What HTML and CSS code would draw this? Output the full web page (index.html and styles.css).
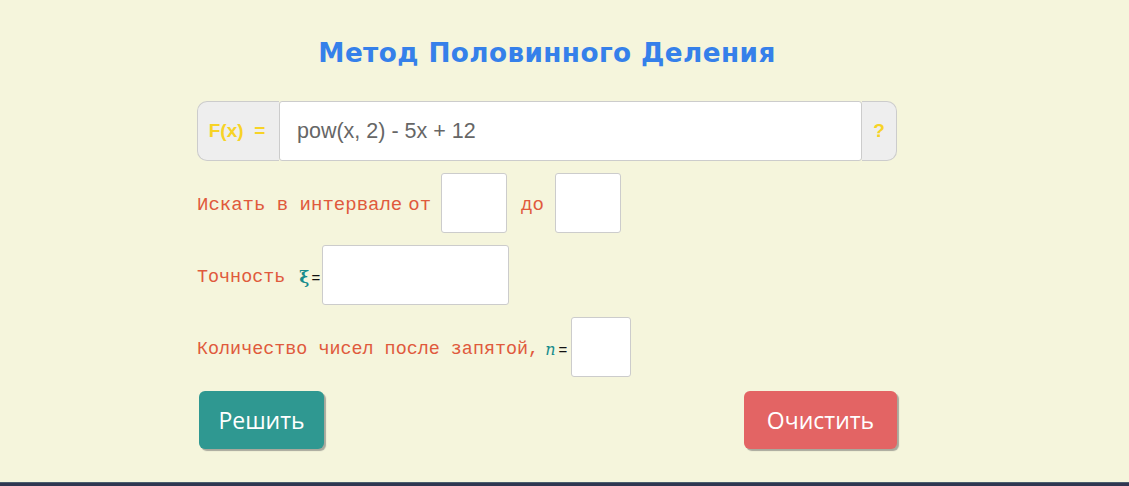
FILE: index.html
```html
<!DOCTYPE html>
<html lang="ru">
<head>
<meta charset="utf-8">
<title>Метод Половинного Деления</title>
<link rel="stylesheet" href="styles.css">
</head>
<body>
<main class="page">
  <div class="wrap">
    <h1 class="title">Метод Половинного Деления</h1>
    <div class="fx-group">
      <span class="addon addon-left">F(x)&nbsp; =</span>
      <input class="fx-input" type="text" value="pow(x, 2) - 5x + 12">
      <span class="addon addon-right">?</span>
    </div>
    <div class="row row-interval">
      <span class="lbl">Искать в интервале</span>
      <span class="lbl lbl-ot">от</span>
      <input class="box box-sq" type="text">
      <span class="lbl lbl-do">до</span>
      <input class="box box-sq" type="text">
    </div>
    <div class="row">
      <span class="lbl">Точность</span>
      <span class="sym sym-xi">ξ</span>
      <span class="eq eq-xi">=</span>
      <input class="box box-wide" type="text">
    </div>
    <div class="row">
      <span class="lbl">Количество чисел после запятой,</span>
      <span class="sym sym-n">n</span>
      <span class="eq">=</span>
      <input class="box box-n" type="text">
    </div>
    <div class="actions">
      <button class="btn btn-solve">Решить</button>
      <button class="btn btn-clear">Очистить</button>
    </div>
  </div>
</main>
<footer class="bottom-bar"></footer>
</body>
</html>
```
FILE: styles.css
```css
html, body {
  margin: 0;
  padding: 0;
  height: 100%;
}
body {
  background: #f5f5dc;
  display: flex;
  flex-direction: column;
  min-height: 100vh;
  font-family: "Liberation Sans", Arial, sans-serif;
}
.page {
  flex: 1;
}
.wrap {
  width: 700px;
  margin-left: 197px;
  display: flex;
  flex-direction: column;
}
.title {
  margin: 31px 0 0;
  height: 44px;
  line-height: 44px;
  text-align: center;
  font-family: "DejaVu Sans", sans-serif;
  font-weight: bold;
  font-size: 26.3px;
  color: #3580ea;
  letter-spacing: 0.4px;
}
.fx-group {
  margin-top: 26px;
  display: flex;
  height: 60px;
}
.addon {
  background: #eeeeee;
  border: 1px solid #cccccc;
  color: #f7d326;
  font-weight: bold;
  font-size: 19px;
  display: flex;
  align-items: center;
  justify-content: center;
  box-sizing: border-box;
}
.addon-left {
  width: 82px;
  border-right: none;
  border-radius: 10px 0 0 10px;
  padding-right: 3px;
}
.addon-right {
  width: 35px;
  border-left: none;
  border-radius: 0 10px 10px 0;
}
.fx-input {
  flex: 1;
  box-sizing: border-box;
  height: 60px;
  border: 1px solid #cccccc;
  border-radius: 3px;
  padding: 0 0 0 17px;
  font-family: "Liberation Sans", Arial, sans-serif;
  font-size: 21.5px;
  color: #666666;
  background: #ffffff;
  outline: none;
}
.row {
  margin-top: 12px;
  display: flex;
  align-items: center;
  height: 60px;
}
.lbl {
  font-family: "Liberation Mono", "Courier New", monospace;
  font-size: 18.4px;
  color: #e05a3c;
  padding-top: 4px;
}
.row-interval .lbl {
  font-size: 19px;
}
.lbl-ot {
  margin-left: 6px;
  margin-right: 10px;
}
.lbl-do {
  margin-left: 14px;
  margin-right: 11px;
}
.sym {
  font-family: "DejaVu Serif", serif;
  color: #178c8c;
  padding-top: 4px;
}
.sym-xi {
  margin-left: 14px;
  font-weight: bold;
  font-size: 17px;
}
.sym-n {
  margin-left: 6px;
  font-style: italic;
  font-size: 16px;
}
.eq {
  font-size: 15px;
  color: #111111;
  margin: 0 4px 0 3px;
  padding-top: 4px;
}
.eq-xi {
  margin: 0 2px 0 2px;
}
.box {
  box-sizing: border-box;
  height: 60px;
  border: 1px solid #cccccc;
  border-radius: 3px;
  background: #ffffff;
  outline: none;
}
.box-sq {
  width: 66px;
}
.box-n {
  width: 60px;
}
.box-wide {
  width: 187px;
}
.actions {
  margin-top: 14px;
  display: flex;
  justify-content: space-between;
  padding-left: 2px;
}
.btn {
  height: 58px;
  border: none;
  border-radius: 6px;
  color: #ffffff;
  font-family: "Open Sans", sans-serif;
  font-size: 23px;
  box-shadow: 2px 2px 1px #a8a89c;
  padding: 0;
  cursor: pointer;
}
.btn-solve {
  width: 125px;
  background: #2f9891;
}
.btn-clear {
  width: 153px;
  background: #e36464;
}
.bottom-bar {
  height: 3px;
  background: #2f3650;
  border-top: 1px solid #4a5d6e;
}
```
